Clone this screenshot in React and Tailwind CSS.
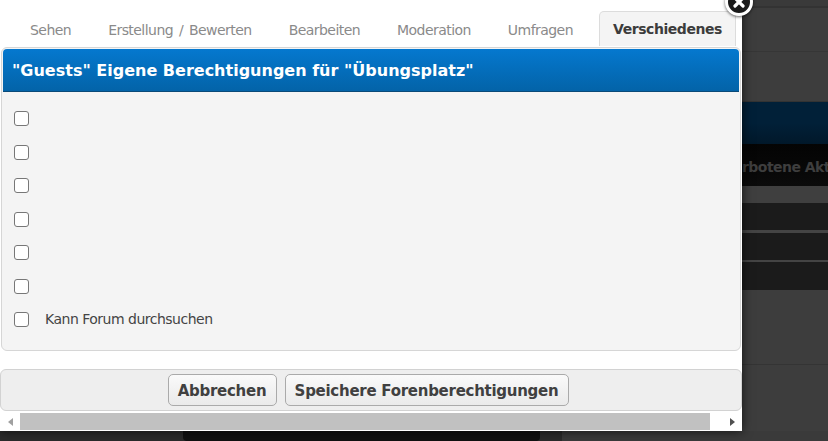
const tabs = ["Sehen", "Erstellung / Bewerten", "Bearbeiten", "Moderation", "Umfragen"];
const rows = ["", "", "", "", "", "", "Kann Forum durchsuchen"];
const font = "font-['DejaVu_Sans',sans-serif]";

function Backdrop() {
  return (
    <div className="flex flex-1 flex-col overflow-hidden bg-[#3d3d3d]">
      <div className="h-[8px] shrink-0 border-b-2 border-[#333] bg-[#3a3a3a]" />
      <div className="h-[44px] shrink-0 border-b border-[#363636]" />
      <div className="h-[50px] shrink-0 border-b border-[#333]" />
      <div className="h-[42px] shrink-0 bg-gradient-to-b from-[#012038] via-[#012038] to-[#01182a]" />
      <div className="h-[42px] shrink-0 bg-gradient-to-b from-[#040404] to-[#0b0b0b] pt-[13px] font-['DejaVu_Sans',sans-serif] text-[14px] font-bold tracking-[-0.55px] whitespace-nowrap text-[#3e3e3e]">
        rbotene Akt
      </div>
      <div className="h-[17px] shrink-0 bg-[#3f3f3f]" />
      <div className="h-[27px] shrink-0 bg-[#1b1b1b]" />
      <div className="h-[3px] shrink-0 bg-[#444]" />
      <div className="h-[27px] shrink-0 bg-[#1b1b1b]" />
      <div className="h-[2px] shrink-0 bg-[#444]" />
      <div className="h-[28px] shrink-0 bg-[#1b1b1b]" />
      <div className="h-[75px] shrink-0 border-b border-[#343434]" />
    </div>
  );
}

export default function App() {
  return (
    <div className={`relative flex h-[441px] w-[828px] overflow-hidden bg-[#3d3d3d] ${font}`}>
      <div className="z-10 flex h-[431px] w-[742px] shrink-0 flex-col bg-white shadow-[0_0_10px_rgba(0,0,0,0.7)]">
        <div className="flex h-[46px] shrink-0 items-end gap-[1px] pl-[12px]">
          {tabs.map((tab) => (
            <div key={tab} className="flex h-[32px] items-center px-[18px] text-[14px] tracking-[-0.55px] whitespace-nowrap text-[#8a8a8a] [word-spacing:2px]">
              {tab}
            </div>
          ))}
          <div className="ml-[7px] flex h-[35px] w-[137px] items-center justify-center rounded-t-[5px] border border-b-0 border-[#dcdcdc] bg-[#f4f4f4] text-[14px] font-bold tracking-[-0.45px] text-[#3c3c3c]">
            Verschiedenes
          </div>
        </div>
        <div className="mx-[1px] mt-[1px] h-[304px] w-[740px] shrink-0 overflow-hidden rounded-[6px] border border-[#d6d6d6] bg-[#f4f4f4]">
          <div className="m-[1px] mb-0 flex h-[43px] items-center rounded-t-[4px] border-b border-[#0a4a78] bg-gradient-to-b from-[#0578cf] to-[#0363a8] pt-[1px] pl-[9px] text-[16px] font-bold text-white">
            "Guests" Eigene Berechtigungen für "Übungsplatz"
          </div>
          <div className="flex flex-col gap-[18.5px] pt-[19px] pl-[12px]">
            {rows.map((label, i) => (
              <label key={i} className="flex h-[15px] items-center gap-[16px] text-[14px] tracking-[-0.5px] text-[#444]">
                <span className="h-[15px] w-[15px] shrink-0 rounded-[3px] border border-[#777] bg-white" />
                {label}
              </label>
            ))}
          </div>
        </div>
        <div className="mt-[18px] flex h-[42px] shrink-0 items-center justify-center gap-[8px] rounded-[6px] border border-[#d2d2d2] bg-[#eeeeee] pr-[6px]">
          <button className="h-[32px] w-[109px] rounded-[5px] border border-[#aaa] bg-gradient-to-b from-[#fafafa] to-[#eaeaea] pt-[2px] text-[15px] font-bold tracking-[-0.27px] text-[#404040]">
            Abbrechen
          </button>
          <button className="h-[32px] w-[284px] rounded-[5px] border border-[#aaa] bg-gradient-to-b from-[#fafafa] to-[#eaeaea] pt-[2px] text-[15px] font-bold tracking-[-0.27px] text-[#404040]">
            Speichere Forenberechtigungen
          </button>
        </div>
        <div className="mt-[2px] flex h-[17px] shrink-0 items-center">
          <div className="flex w-[20px] justify-center">
            <div className="h-0 w-0 border-y-[4px] border-r-[5px] border-y-transparent border-r-[#a0a0a0]" />
          </div>
          <div className="h-[17px] w-[690px] bg-[#c1c1c1]" />
          <div className="flex flex-1 justify-center pl-[12px]">
            <div className="h-0 w-0 border-y-[4px] border-l-[5px] border-y-transparent border-l-[#505050]" />
          </div>
        </div>
        <div className="h-[2px]" />
      </div>
      <Backdrop />
      <div className="absolute top-[-12px] left-[725px] z-20 flex h-[28px] w-[28px] items-center justify-center rounded-full border-[3px] border-white bg-[#1a1a1a] shadow-[0_1px_3px_rgba(0,0,0,0.6)]">
        <svg width="16" height="16" viewBox="0 0 16 16" stroke="white" strokeWidth="3.2" strokeLinecap="round">
          <line x1="4" y1="4" x2="12" y2="12" />
          <line x1="12" y1="4" x2="4" y2="12" />
        </svg>
      </div>
      <div className="absolute bottom-0 left-0 z-0 flex h-[10px] w-[828px] bg-[#2b2b2b]">
        <div className="ml-[183px] h-[10px] w-[357px] rounded-b-[4px] bg-[#111]" />
        <div className="ml-[22px] h-[10px] flex-1 bg-[#3a3a3a]" />
      </div>
    </div>
  );
}
